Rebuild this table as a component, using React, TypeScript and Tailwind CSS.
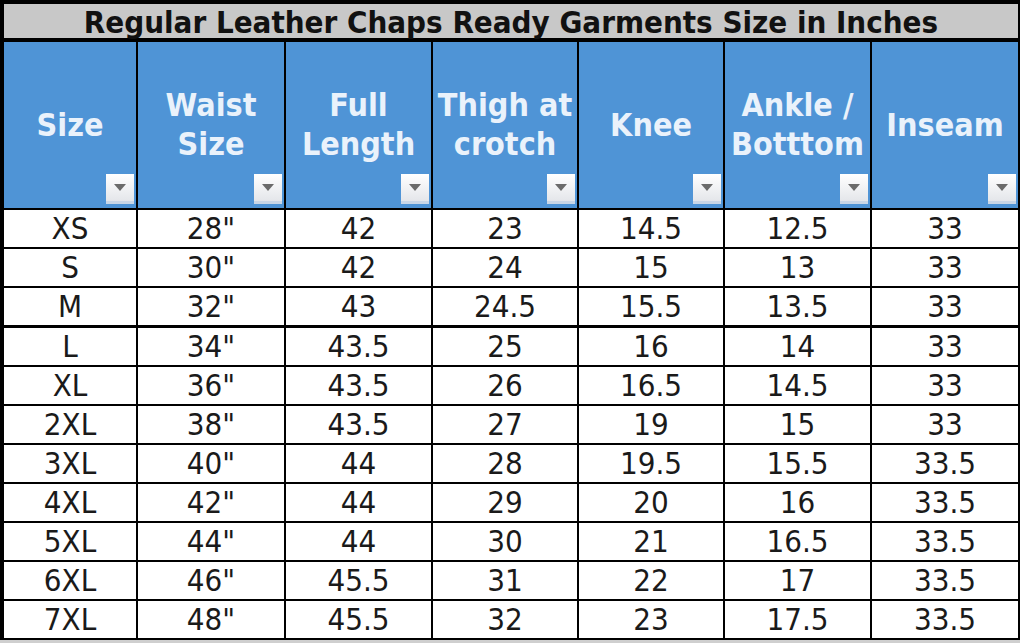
import React from 'react';

const cols = [
  { label: ['Size'], w: 'w-[134px]' },
  { label: ['Waist', 'Size'], w: 'w-[148px]' },
  { label: ['Full', 'Length'], w: 'w-[147px]' },
  { label: ['Thigh at', 'crotch'], w: 'w-[146px]' },
  { label: ['Knee'], w: 'w-[146px]' },
  { label: ['Ankle /', 'Botttom'], w: 'w-[147px]' },
  { label: ['Inseam'], w: 'w-[146px]' },
];

const rows = [
  ['XS', '28"', '42', '23', '14.5', '12.5', '33'],
  ['S', '30"', '42', '24', '15', '13', '33'],
  ['M', '32"', '43', '24.5', '15.5', '13.5', '33'],
  ['L', '34"', '43.5', '25', '16', '14', '33'],
  ['XL', '36"', '43.5', '26', '16.5', '14.5', '33'],
  ['2XL', '38"', '43.5', '27', '19', '15', '33'],
  ['3XL', '40"', '44', '28', '19.5', '15.5', '33.5'],
  ['4XL', '42"', '44', '29', '20', '16', '33.5'],
  ['5XL', '44"', '44', '30', '21', '16.5', '33.5'],
  ['6XL', '46"', '45.5', '31', '22', '17', '33.5'],
  ['7XL', '48"', '45.5', '32', '23', '17.5', '33.5'],
];

const font = { fontFamily: '"DejaVu Sans Condensed", "DejaVu Sans", Verdana, sans-serif' };

function FilterButton() {
  return (
    <div className="absolute right-[2px] bottom-[4px] w-[28px] h-[30px] flex flex-col">
      <div className="flex-1 bg-gradient-to-b from-[#ffffff] to-[#e4e6ea] flex items-center justify-center">
        <svg width="12" height="7" viewBox="0 0 12 7">
          <polygon points="0,0 12,0 6,7" fill="#6b6b6b" />
        </svg>
      </div>
      <div className="h-[3px] bg-[#c9d6e6]" />
    </div>
  );
}

export default function App() {
  return (
    <div className="w-[1024px] h-[643px] bg-white overflow-hidden" style={font}>
      <div className="w-[1020px] border-l-[4px] border-t-[4px] border-r-[2px] border-black">
        {/* Title */}
        <div className="h-[34px] bg-[#c8c8c8] border-b-[4px] border-black box-content flex items-center justify-center">
          <span className="text-[31px] font-bold text-[#111] leading-none mt-[2px]">
            Regular Leather Chaps Ready Garments Size in Inches
          </span>
        </div>

        {/* Header */}
        <div className="flex h-[168px] border-b-[2px] border-black">
          {cols.map((c, i) => (
            <div
              key={i}
              className={`${c.w} relative bg-[#4f94d6] flex flex-col items-center justify-center ${i < cols.length - 1 ? 'border-r-[2px] border-black' : ''}`}
            >
              {c.label.map((l) => (
                <div key={l} className="text-[32px] font-bold text-[#eaf2fb] leading-[39px] whitespace-nowrap">
                  {l}
                </div>
              ))}
              <FilterButton />
            </div>
          ))}
        </div>

        {/* Body */}
        {rows.map((r, ri) => (
          <div
            key={ri}
            className={`flex ${ri === 2 ? 'h-[40px] border-b-[3px]' : 'h-[39px] border-b-[2px]'} border-black`}
          >
            {r.map((v, ci) => (
              <div
                key={ci}
                className={`${cols[ci].w} flex items-center justify-center text-[31px] text-[#1a1a1a] leading-none ${ci < r.length - 1 ? 'border-r-[2px] border-black' : ''}`}
              >
                {v}
              </div>
            ))}
          </div>
        ))}
      </div>
      <div className="w-[1020px] h-[3px] bg-[#cfcfcf]" />
    </div>
  );
}
